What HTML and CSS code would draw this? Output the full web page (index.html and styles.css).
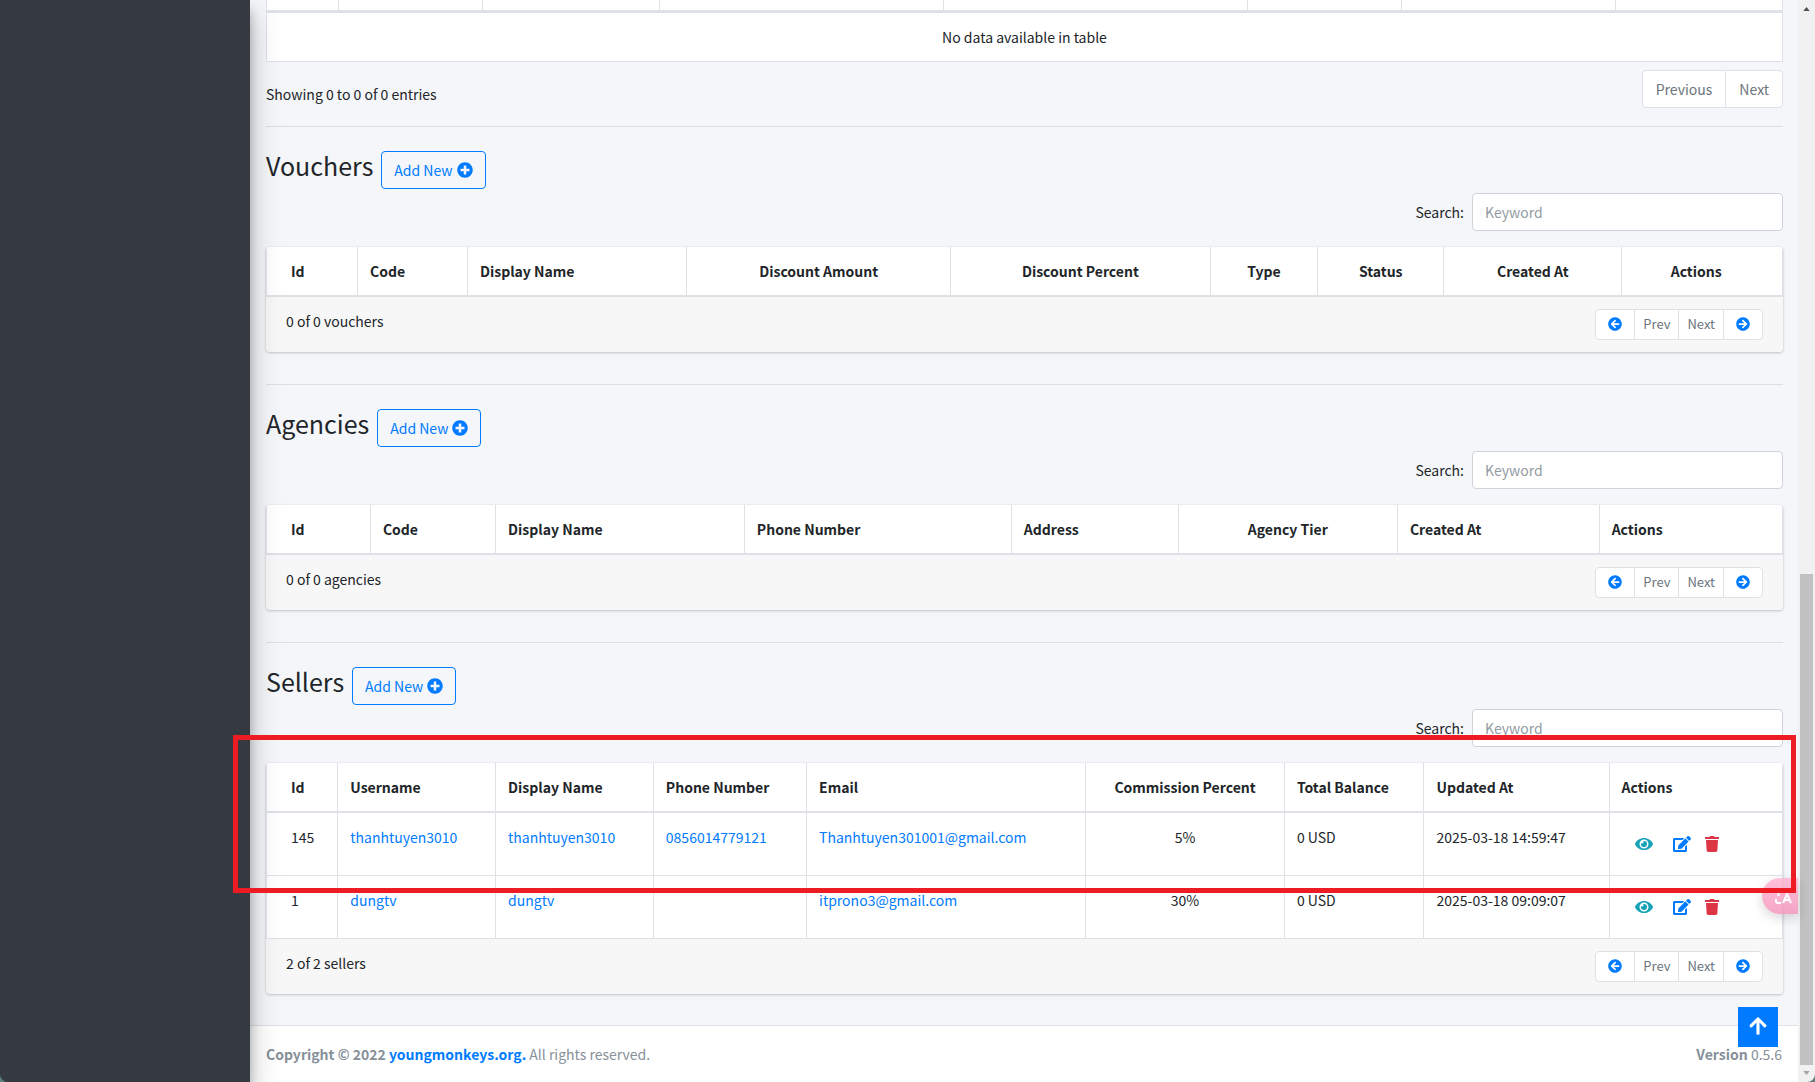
FILE: index.html
```html
<!DOCTYPE html>
<html lang="en">
<head>
    <meta charset="UTF-8">
    <meta name="viewport" content="width=device-width, initial-scale=1.0">
    <title>Admin</title>
    <link rel="stylesheet" href="styles.css">
</head>
<body>
    <!-- icon sprite -->
    <svg class="sprite" aria-hidden="true">
        <symbol id="plus-circle" viewBox="0 0 512 512"><path d="M256 8C119 8 8 119 8 256s111 248 248 248 248-111 248-248S393 8 256 8zm144 276c0 6.600-5.400 12-12 12h-92v92c0 6.600-5.400 12-12 12h-56c-6.600 0-12-5.400-12-12v-92h-92c-6.600 0-12-5.400-12-12v-56c0-6.600 5.400-12 12-12h92v-92c0-6.600 5.400-12 12-12h56c6.600 0 12 5.400 12 12v92h92c6.600 0 12 5.400 12 12v56z"/></symbol>
        <symbol id="arrow-circle" viewBox="0 0 512 512"><path d="M256 504C119 504 8 393 8 256S119 8 256 8s248 111 248 248-111 248-248 248zm28.900-143.600L209.400 288H392c13.300 0 24-10.700 24-24v-16c0-13.300-10.700-24-24-24H209.400l75.500-72.400c9.700-9.300 9.900-24.800.4-34.300l-11-10.900c-9.400-9.400-24.600-9.400-33.900 0L107.700 239c-9.400 9.400-9.400 24.600 0 33.900l132.700 132.700c9.400 9.400 24.600 9.400 33.900 0l11-10.900c9.500-9.500 9.300-25-.4-34.300z"/></symbol>
        <symbol id="arrow-up" viewBox="0 0 448 512"><path d="M34.900 289.500l-22.200-22.200c-9.400-9.400-9.400-24.600 0-33.900L207 39c9.400-9.400 24.600-9.400 33.900 0l194.300 194.300c9.400 9.400 9.400 24.600 0 33.900L413 289.400c-9.500 9.500-25 9.300-34.300-.4L264 168.600V456c0 13.300-10.700 24-24 24h-32c-13.300 0-24-10.700-24-24V168.600L69.200 289.100c-9.300 9.800-24.800 10-34.300.4z"/></symbol>
        <symbol id="eye" viewBox="0 0 576 512"><path d="M572.520 241.400C518.290 135.590 410.930 64 288 64S57.680 135.640 3.480 241.410a32.350 32.350 0 0 0 0 29.190C57.710 376.410 165.070 448 288 448s230.320-71.640 284.520-177.410a32.350 32.350 0 0 0 0-29.190zM288 400a144 144 0 1 1 144-144 143.930 143.930 0 0 1-144 144zm0-240a95.310 95.310 0 0 0-25.310 3.790 47.850 47.850 0 0 1-66.900 66.900A95.780 95.780 0 1 0 288 160z"/></symbol>
        <symbol id="edit" viewBox="0 0 576 512"><path d="M402.600 83.200l90.200 90.200c3.800 3.800 3.800 10 0 13.800L274.400 405.600l-92.800 10.300c-12.400 1.400-22.900-9.100-21.500-21.500l10.300-92.800L388.800 83.200c3.800-3.800 10-3.800 13.800 0zm162-22.900l-48.800-48.800c-15.200-15.200-39.900-15.200-55.200 0l-35.400 35.400c-3.800 3.800-3.800 10 0 13.800l90.200 90.200c3.800 3.800 10 3.800 13.800 0l35.400-35.400c15.200-15.300 15.200-40 0-55.200zM384 346.200V448H64V128h229.800c3.200 0 6.200-1.300 8.500-3.500l40-40c7.600-7.600 2.200-20.500-8.500-20.500H48C21.500 64 0 85.500 0 112v352c0 26.500 21.500 48 48 48h352c26.500 0 48-21.500 48-48V306.200c0-10.700-12.900-16-20.500-8.500l-40 40c-2.200 2.300-3.500 5.300-3.500 8.500z"/></symbol>
        <symbol id="trash" viewBox="0 0 448 512"><path d="M432 32H312l-9.400-18.700A24 24 0 0 0 281.100 0H166.800a23.720 23.720 0 0 0-21.400 13.300L136 32H16A16 16 0 0 0 0 48v32a16 16 0 0 0 16 16h416a16 16 0 0 0 16-16V48a16 16 0 0 0-16-16zM53.200 467a48 48 0 0 0 47.900 45h245.800a48 48 0 0 0 47.900-45L416 128H32z"/></symbol>
    </svg>

    <div class="wrapper">
        <aside class="sidebar"></aside>

        <div class="page">
            <main class="content">
                <table class="table orders">
                    <thead>
                        <tr><th></th><th></th><th></th><th></th><th></th><th></th><th></th><th></th></tr>
                    </thead>
                    <tbody>
                        <tr><td colspan="8" class="center">No data available in table</td></tr>
                    </tbody>
                </table>
                <div class="table-info">
                    <p>Showing 0 to 0 of 0 entries</p>
                    <div class="pagination">
                        <button type="button">Previous</button>
                        <button type="button">Next</button>
                    </div>
                </div>

                <section class="section">
                    <div class="section-head">
                        <h3>Vouchers</h3>
                        <button type="button" class="btn-add">Add New <svg><use href="#plus-circle"/></svg></button>
                    </div>
                    <div class="search">
                        <label for="voucherKeyword">Search:</label>
                        <input type="text" id="voucherKeyword" placeholder="Keyword">
                    </div>
                    <div class="card">
                        <table class="table vouchers">
                            <thead>
                                <tr>
                                    <th>Id</th>
                                    <th>Code</th>
                                    <th>Display Name</th>
                                    <th class="center">Discount Amount</th>
                                    <th class="center">Discount Percent</th>
                                    <th class="center">Type</th>
                                    <th class="center">Status</th>
                                    <th class="center">Created At</th>
                                    <th class="center">Actions</th>
                                </tr>
                            </thead>
                        </table>
                        <div class="card-footer">
                            <span>0 of 0 vouchers</span>
                            <div class="pagination small">
                                <button type="button" aria-label="First"><svg><use href="#arrow-circle"/></svg></button>
                                <button type="button">Prev</button>
                                <button type="button">Next</button>
                                <button type="button" aria-label="Last"><svg class="flip"><use href="#arrow-circle"/></svg></button>
                            </div>
                        </div>
                    </div>
                </section>

                <section class="section">
                    <div class="section-head">
                        <h3>Agencies</h3>
                        <button type="button" class="btn-add">Add New <svg><use href="#plus-circle"/></svg></button>
                    </div>
                    <div class="search">
                        <label for="agencyKeyword">Search:</label>
                        <input type="text" id="agencyKeyword" placeholder="Keyword">
                    </div>
                    <div class="card">
                        <table class="table agencies">
                            <thead>
                                <tr>
                                    <th>Id</th>
                                    <th>Code</th>
                                    <th>Display Name</th>
                                    <th>Phone Number</th>
                                    <th>Address</th>
                                    <th class="center">Agency Tier</th>
                                    <th>Created At</th>
                                    <th>Actions</th>
                                </tr>
                            </thead>
                        </table>
                        <div class="card-footer">
                            <span>0 of 0 agencies</span>
                            <div class="pagination small">
                                <button type="button" aria-label="First"><svg><use href="#arrow-circle"/></svg></button>
                                <button type="button">Prev</button>
                                <button type="button">Next</button>
                                <button type="button" aria-label="Last"><svg class="flip"><use href="#arrow-circle"/></svg></button>
                            </div>
                        </div>
                    </div>
                </section>

                <section class="section">
                    <div class="section-head">
                        <h3>Sellers</h3>
                        <button type="button" class="btn-add">Add New <svg><use href="#plus-circle"/></svg></button>
                    </div>
                    <div class="search">
                        <label for="sellerKeyword">Search:</label>
                        <input type="text" id="sellerKeyword" placeholder="Keyword">
                    </div>
                    <div class="card">
                        <table class="table sellers">
                            <thead>
                                <tr>
                                    <th>Id</th>
                                    <th>Username</th>
                                    <th>Display Name</th>
                                    <th>Phone Number</th>
                                    <th>Email</th>
                                    <th class="center">Commission Percent</th>
                                    <th>Total Balance</th>
                                    <th>Updated At</th>
                                    <th>Actions</th>
                                </tr>
                            </thead>
                            <tbody>
                                <tr>
                                    <td>145</td>
                                    <td><a href="#">thanhtuyen3010</a></td>
                                    <td><a href="#">thanhtuyen3010</a></td>
                                    <td><a href="#">0856014779121</a></td>
                                    <td><a href="#">Thanhtuyen301001@gmail.com</a></td>
                                    <td class="center">5%</td>
                                    <td>0 USD</td>
                                    <td>2025-03-18 14:59:47</td>
                                    <td>
                                        <div class="actions">
                                            <button type="button" class="view" aria-label="View"><svg><use href="#eye"/></svg></button>
                                            <button type="button" class="edit" aria-label="Edit"><svg><use href="#edit"/></svg></button>
                                            <button type="button" class="delete" aria-label="Delete"><svg><use href="#trash"/></svg></button>
                                        </div>
                                    </td>
                                </tr>
                                <tr>
                                    <td>1</td>
                                    <td><a href="#">dungtv</a></td>
                                    <td><a href="#">dungtv</a></td>
                                    <td></td>
                                    <td><a href="#">itprono3@gmail.com</a></td>
                                    <td class="center">30%</td>
                                    <td>0 USD</td>
                                    <td>2025-03-18 09:09:07</td>
                                    <td>
                                        <div class="actions">
                                            <button type="button" class="view" aria-label="View"><svg><use href="#eye"/></svg></button>
                                            <button type="button" class="edit" aria-label="Edit"><svg><use href="#edit"/></svg></button>
                                            <button type="button" class="delete" aria-label="Delete"><svg><use href="#trash"/></svg></button>
                                        </div>
                                    </td>
                                </tr>
                            </tbody>
                        </table>
                        <div class="card-footer">
                            <span>2 of 2 sellers</span>
                            <div class="pagination small">
                                <button type="button" aria-label="First"><svg><use href="#arrow-circle"/></svg></button>
                                <button type="button">Prev</button>
                                <button type="button">Next</button>
                                <button type="button" aria-label="Last"><svg class="flip"><use href="#arrow-circle"/></svg></button>
                            </div>
                        </div>
                    </div>
                </section>
            </main>

            <footer class="footer">
                <div><strong>Copyright © 2022 <a href="#">youngmonkeys.org</a><a href="#">.</a></strong> All rights reserved.</div>
                <div><strong>Version</strong> 0.5.6</div>
            </footer>
        </div>

        <div class="scrollbar">
            <svg class="up" viewBox="0 0 8 5"><path d="M0 5L4 0l4 5z"/></svg>
            <div class="thumb"></div>
            <svg class="down" viewBox="0 0 8 5"><path d="M0 0l4 5 4-5z"/></svg>
        </div>
    </div>

    <button type="button" class="back-to-top" aria-label="Back to top"><svg><use href="#arrow-up"/></svg></button>
    <button type="button" class="translate" aria-label="Translate">
        <svg viewBox="0 0 18 18"><path d="M1 5h7M4.500 1v8M10 2h5v3M2 12v2q0 2 2 2h3"/><path d="M9 16l4-9 4 9M10.500 13h5"/></svg>
    </button>
    <div class="highlight"></div>
</body>
</html>
```
FILE: styles.css
```css
* {
    box-sizing: border-box;
}
html {
    background: #5f7f78;
}
body {
    margin: 0;
    height: 100vh;
    overflow: hidden;
    font-family: "Noto Sans CJK SC", "Noto Sans", sans-serif;
    font-size: 14px;
    line-height: 24px;
    color: #212529;
}
button, input {
    font: inherit;
}
button {
    cursor: pointer;
}
svg {
    fill: currentColor;
}
a {
    color: #007bff;
    text-decoration: none;
}
h3, p {
    margin: 0;
}
.sprite {
    display: none;
}
.wrapper {
    display: flex;
    height: 100vh;
    border-radius: 0 0 8px 8px;
    overflow: hidden;
}
.sidebar {
    flex: 0 0 250px;
    background: #343a40;
    box-shadow: 0 14px 28px rgba(0, 0, 0, .25), 0 10px 10px rgba(0, 0, 0, .22);
    z-index: 1;
}
.page {
    flex: 1;
    min-width: 0;
    display: flex;
    flex-direction: column;
    background: #f4f6f9;
}
.content {
    flex: 1;
    padding: 0 15px 31px 16px;
}

/* tables */
.table {
    width: 100%;
    table-layout: fixed;
    border-collapse: separate;
    border-spacing: 0;
    background: #fff;
}
.table th, .table td {
    padding: 12px 0 12px 12px;
    border-left: 1px solid #dee2e6;
    text-align: left;
    vertical-align: top;
    white-space: nowrap;
}
.table th {
    border-bottom: 2px solid #dee2e6;
    font-weight: 700;
}
.table td {
    border-bottom: 1px solid #dee2e6;
}
.table .center {
    padding-right: 12px;
    text-align: center;
}
.table th:last-child, .table td:last-child {
    border-right: 1px solid #dee2e6;
}
.card .table th:first-child, .card .table td:first-child {
    padding-left: 24px;
}
.card .table th:last-child, .card .table td:last-child {
    padding-right: 24px;
}
.orders th {
    height: 13px;
    padding: 0;
    border-bottom-width: 3px;
}
.orders th:nth-child(1) { width: 4.75%; }
.orders th:nth-child(2) { width: 9.5%; }
.orders th:nth-child(3) { width: 11.65%; }
.orders th:nth-child(4) { width: 18.7%; }
.orders th:nth-child(5) { width: 20.1%; }
.orders th:nth-child(6) { width: 10.1%; }
.orders th:nth-child(7) { width: 14.1%; }

.vouchers th:nth-child(1) { width: 6%; }
.vouchers th:nth-child(2) { width: 7.25%; }
.vouchers th:nth-child(3) { width: 14.45%; }
.vouchers th:nth-child(4) { width: 17.4%; }
.vouchers th:nth-child(5) { width: 17.1%; }
.vouchers th:nth-child(6) { width: 7.1%; }
.vouchers th:nth-child(7) { width: 8.3%; }
.vouchers th:nth-child(8) { width: 11.75%; }

.agencies th:nth-child(1) { width: 6.85%; }
.agencies th:nth-child(2) { width: 8.25%; }
.agencies th:nth-child(3) { width: 16.4%; }
.agencies th:nth-child(4) { width: 17.6%; }
.agencies th:nth-child(5) { width: 11%; }
.agencies th:nth-child(6) { width: 14.45%; }
.agencies th:nth-child(7) { width: 13.3%; }

.sellers th:nth-child(1) { width: 4.7%; }
.sellers th:nth-child(2) { width: 10.4%; }
.sellers th:nth-child(3) { width: 10.4%; }
.sellers th:nth-child(4) { width: 10.1%; }
.sellers th:nth-child(5) { width: 18.4%; }
.sellers th:nth-child(6) { width: 13.1%; }
.sellers th:nth-child(7) { width: 9.2%; }
.sellers th:nth-child(8) { width: 12.2%; }

.table-info {
    display: flex;
    justify-content: space-between;
    padding: 8px 0 18px;
}
.table-info p {
    padding-top: 12px;
}

/* pagination */
.pagination {
    display: flex;
    height: 38px;
}
.pagination button {
    padding: 0 13px;
    background: #fff;
    border: 1px solid #dee2e6;
    color: #6c757d;
}
.pagination button + button {
    margin-left: -1px;
}
.pagination button:first-child {
    border-radius: 4px 0 0 4px;
}
.pagination button:last-child {
    border-radius: 0 4px 4px 0;
}
.pagination.small {
    height: 31px;
    font-size: 13px;
    line-height: 22px;
}
.pagination.small button {
    padding: 0 8px 1px;
}
.pagination.small button[aria-label] {
    padding: 0 12px 2px;
    color: #007bff;
}
.pagination svg {
    display: block;
    width: 14px;
    height: 14px;
}
.flip {
    transform: scaleX(-1);
}

/* sections */
.section {
    padding: 24px 0 0;
    border-top: 1px solid #dcdee2;
}
.section + .section {
    margin-top: 32px;
}
.section-head {
    display: flex;
    align-items: baseline;
    gap: 8px;
    height: 38px;
}
.section-head h3 {
    font-size: 25px;
    font-weight: 400;
    line-height: 28px;
}
.btn-add {
    display: flex;
    align-items: center;
    gap: 4px;
    height: 38px;
    padding: 0 12px;
    background: transparent;
    border: 1px solid #007bff;
    border-radius: 4px;
    color: #007bff;
}
.btn-add svg {
    width: 16px;
    height: 16px;
}
.search {
    display: flex;
    justify-content: flex-end;
    align-items: center;
    gap: 8px;
    padding: 4px 0 16px;
}
.search input {
    width: 20.5%;
    height: 38px;
    padding: 0 12px;
    background: #fff;
    border: 1px solid #ced4da;
    border-radius: 4px;
}
.search input::placeholder {
    color: #939ba2;
}
.card {
    border-radius: 4px;
    box-shadow: 0 0 1px rgba(0, 0, 0, .13), 0 1px 3px rgba(0, 0, 0, .2);
    overflow: hidden;
}
.card-footer {
    display: flex;
    justify-content: space-between;
    align-items: flex-start;
    padding: 12px 20px;
    background: #f7f7f7;
}

/* row actions */
.actions {
    display: flex;
    align-items: center;
    height: 38px;
}
.actions button {
    display: flex;
    padding: 0 7px;
    background: none;
    border: 0;
}
.actions svg {
    width: 18px;
    height: 16px;
}
.actions .view {
    padding: 0 13px;
    color: #17a2b8;
}
.actions .edit {
    color: #007bff;
}
.actions .delete {
    color: #dc3545;
}
.actions .delete svg {
    width: 14px;
}

.footer {
    display: flex;
    justify-content: space-between;
    padding: 16px;
    background: #fff;
    border-top: 1px solid #dee2e6;
    color: #869099;
}

/* scrollbar */
.scrollbar {
    flex: 0 0 17px;
    display: flex;
    flex-direction: column;
    align-items: center;
    justify-content: space-between;
    padding: 7px 2px;
    background: #f1f1f1;
}
.scrollbar svg {
    width: 7px;
    height: 4px;
    color: #505050;
}
.scrollbar .down {
    color: #a3a3a3;
}
.thumb {
    width: 13px;
    height: 46%;
    margin: auto 0 6px;
    background: #c1c1c1;
}

/* overlays */
.back-to-top {
    position: fixed;
    right: 37px;
    bottom: 35px;
    z-index: 2;
    width: 40px;
    height: 40px;
    padding: 0 0 3px;
    background: #007bff;
    border: 0;
    color: #fff;
}
.back-to-top svg {
    display: block;
    width: 18px;
    height: 20px;
    margin: 0 auto;
}
.translate {
    position: fixed;
    right: 17px;
    bottom: 168px;
    z-index: 2;
    width: 36px;
    height: 36px;
    padding: 0 6px 0 12px;
    background: linear-gradient(#ffb3d1, #f58fb8);
    border: 0;
    border-radius: 18px 0 0 18px;
    box-shadow: 0 4px 12px rgba(0, 0, 0, .2);
    opacity: .8;
}
.translate svg {
    display: block;
    width: 18px;
    height: 18px;
    fill: none;
    stroke: #fff;
    stroke-width: 2;
}
.highlight {
    position: fixed;
    top: 735px;
    left: 233px;
    right: 19px;
    z-index: 3;
    height: 158px;
    border: 5px solid #ed1c24;
    pointer-events: none;
}
```
